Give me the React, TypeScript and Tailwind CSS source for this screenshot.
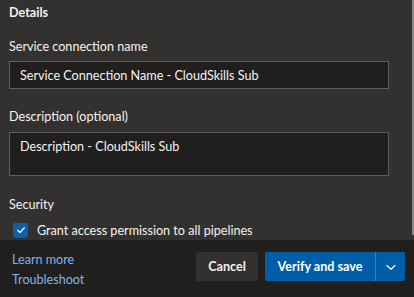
import React from "react";

const font = { fontFamily: 'Lato, "Open Sans", sans-serif' };

const App: React.FC = () => {
  return (
    <div
      className="w-[414px] h-[297px] flex flex-col bg-[#323130] text-[#f3f2f1] text-[12.6px] leading-[20px] overflow-hidden"
      style={font}
    >
      {/* scrollable content */}
      <div className="relative flex-1 pl-[9px] pr-[25px] pt-[3px]">
        <div className="font-bold">Details</div>

        <label className="block mt-[14px]">Service connection name</label>
        <div className="mt-[4px] h-[28px] border border-[#605e5c] bg-[#201f1e] px-[10px] pt-[2px] flex items-center">
          Service Connection Name - CloudSkills Sub
        </div>

        <label className="block mt-[18px]">Description (optional)</label>
        <div className="mt-[5px] h-[44px] border border-[#605e5c] bg-[#201f1e] px-[10px] pt-[4px]">
          Description - CloudSkills Sub
        </div>

        <div className="mt-[19px]">Security</div>
        <div className="mt-[5px] flex items-center h-[20px]">
          <span className="ml-[4px] w-[15px] h-[15px] rounded-[3px] bg-[#0f5fad] flex items-center justify-center">
            <svg viewBox="0 0 12 12" className="w-[10px] h-[10px]" fill="none" stroke="#ffffff" strokeWidth="1.4" strokeLinecap="round" strokeLinejoin="round">
              <path d="M2 6.3 4.7 9 10 3.3" />
            </svg>
          </span>
          <span className="ml-[9px] pt-[1px]">Grant access permission to all pipelines</span>
        </div>

        <div className="absolute right-0 top-0 w-[2px] h-[235px] bg-[#8a8886]" />
      </div>

      {/* footer */}
      <div className="h-[57px] shrink-0 bg-[#201f1e] flex justify-between pl-[12px] pr-[9px]">
        <div className="pt-[10px] flex flex-col text-[#80b4e6]">
          <span>Learn more</span>
          <span>Troubleshoot</span>
        </div>
        <div className="pt-[12px] flex gap-[7px]">
          <button className="h-[29px] w-[62px] pt-[1px] rounded-[2px] bg-[#323130] font-bold text-[#f3f2f1]">
            Cancel
          </button>
          <div className="h-[29px] flex rounded-[2px] bg-[#005ea8] text-white font-bold">
            <button className="w-[111px] pt-[1px] border-r border-[#1c86d8]">Verify and save</button>
            <button className="w-[29px] flex items-center justify-center">
              <svg viewBox="0 0 12 12" className="w-[12px] h-[12px]" fill="none" stroke="#ffffff" strokeWidth="1.2" strokeLinecap="round" strokeLinejoin="round">
                <path d="M2 4.5 6 8.2 10 4.5" />
              </svg>
            </button>
          </div>
        </div>
      </div>
    </div>
  );
};

export default App;
